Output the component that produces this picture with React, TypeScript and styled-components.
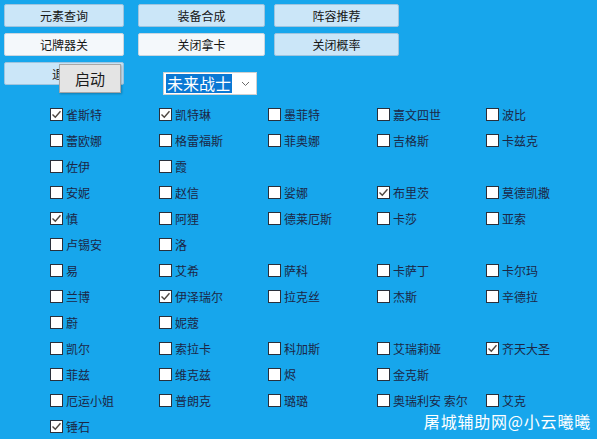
import React from "react";
import styled, { createGlobalStyle } from "styled-components";

const GlobalStyle = createGlobalStyle`
  html, body {
    margin: 0;
    padding: 0;
    background-color: #17a6ec;
  }
  * {
    box-sizing: border-box;
  }
`;

const Wrapper = styled.div`
  position: relative;
  width: 597px;
  height: 439px;
  overflow: hidden;
  background-color: #17a6ec;
  padding: 4px 0 0 4px;
  font-family: "Noto Sans CJK SC", "Noto Sans", sans-serif;
`;
const ToolGrid = styled.div`
  display: grid;
  grid-template-columns: 134px 136px 126px;
  grid-auto-rows: 23px;
  row-gap: 6px;
`;
const ToolButton = styled.button<{ $w: number; $light?: boolean }>`
  width: ${(p) => p.$w}px;
  height: 23px;
  padding: 0;
  border: 1px solid ${(p) => (p.$light ? "#c9d6e0" : "#9fc4de")};
  border-radius: 2px;
  background-color: ${(p) => (p.$light ? "#f4f8fb" : "#cbe6f8")};
  color: #151515;
  font-family: inherit;
  font-size: 12px;
  line-height: 21px;
  cursor: pointer;
`;
const ControlRow = styled.div`
  position: relative;
  display: flex;
  align-items: flex-start;
  margin-top: 6px;
`;
const StartPopup = styled.div`
  position: absolute;
  left: 55px;
  top: 2px;
  width: 62px;
  height: 29px;
  display: flex;
  align-items: center;
  justify-content: center;
  background-color: #e4e4e4;
  border: 1px solid #a6a6a6;
  box-shadow: 1px 1px 2px rgba(0, 0, 0, 0.25);
  color: #1a1a1a;
  font-size: 15px;
`;
const Select = styled.div`
  display: flex;
  align-items: center;
  width: 94px;
  height: 23px;
  margin: 10px 0 0 39px;
  padding: 0 6px 0 2px;
  background-color: #ffffff;
  border: 1px solid #d0d0d0;
`;
const SelectValue = styled.span`
  background-color: #0a78d4;
  color: #ffffff;
  font-size: 16px;
  line-height: 19px;
  padding: 0 1px;
`;
const Chevron = styled.svg`
  margin-left: auto;
`;
const ChampionGrid = styled.div`
  display: grid;
  grid-template-columns: repeat(5, 109px);
  grid-auto-rows: 26px;
  margin: 6px 0 0 46px;
`;
const Item = styled.label`
  display: flex;
  align-items: center;
  gap: 3px;
  color: #1c2746;
  font-size: 12px;
  white-space: nowrap;
`;
const Box = styled.span`
  display: flex;
  align-items: center;
  justify-content: center;
  width: 13px;
  height: 13px;
  background-color: #ffffff;
  border: 1px solid #2a2f3a;
`;
const Watermark = styled.div`
  position: absolute;
  right: 6px;
  bottom: 6px;
  color: #ffffff;
  font-size: 16px;
  letter-spacing: 0.8px;
`;

type Champion = { name: string; checked?: boolean } | null;

const rows: Champion[][] = [
  [{ name: "雀斯特", checked: true }, { name: "凯特琳", checked: true }, { name: "墨菲特" }, { name: "嘉文四世" }, { name: "波比" }],
  [{ name: "蕾欧娜" }, { name: "格雷福斯" }, { name: "菲奥娜" }, { name: "吉格斯" }, { name: "卡兹克" }],
  [{ name: "佐伊" }, { name: "霞" }, null, null, null],
  [{ name: "安妮" }, { name: "赵信" }, { name: "娑娜" }, { name: "布里茨", checked: true }, { name: "莫德凯撒" }],
  [{ name: "慎", checked: true }, { name: "阿狸" }, { name: "德莱厄斯" }, { name: "卡莎" }, { name: "亚索" }],
  [{ name: "卢锡安" }, { name: "洛" }, null, null, null],
  [{ name: "易" }, { name: "艾希" }, { name: "萨科" }, { name: "卡萨丁" }, { name: "卡尔玛" }],
  [{ name: "兰博" }, { name: "伊泽瑞尔", checked: true }, { name: "拉克丝" }, { name: "杰斯" }, { name: "辛德拉" }],
  [{ name: "蔚" }, { name: "妮蔻" }, null, null, null],
  [{ name: "凯尔" }, { name: "索拉卡" }, { name: "科加斯" }, { name: "艾瑞莉娅" }, { name: "齐天大圣", checked: true }],
  [{ name: "菲兹" }, { name: "维克兹" }, { name: "烬" }, { name: "金克斯" }, null],
  [{ name: "厄运小姐" }, { name: "普朗克" }, { name: "璐璐" }, { name: "奥瑞利安 索尔" }, { name: "艾克" }],
  [{ name: "锤石", checked: true }, null, null, null, null],
];

function Check() {
  return (
    <svg width="11" height="11" viewBox="0 0 11 11">
      <path d="M1.5 5.5 L4.3 8.3 L9.5 2.2" fill="none" stroke="#4d4640" strokeWidth="1.4" />
    </svg>
  );
}

function App() {
  return (
    <Wrapper>
      <GlobalStyle />
      <ToolGrid>
        <ToolButton $w={120}>元素查询</ToolButton>
        <ToolButton $w={127}>装备合成</ToolButton>
        <ToolButton $w={125}>阵容推荐</ToolButton>
        <ToolButton $w={120} $light>
          记牌器关
        </ToolButton>
        <ToolButton $w={127} $light>
          关闭拿卡
        </ToolButton>
        <ToolButton $w={125}>关闭概率</ToolButton>
      </ToolGrid>
      <ControlRow>
        <ToolButton $w={120}>退出</ToolButton>
        <StartPopup>启动</StartPopup>
        <Select>
          <SelectValue>未来战士</SelectValue>
          <Chevron width="9" height="6" viewBox="0 0 9 6">
            <path d="M1 1 L4.5 4.5 L8 1" fill="none" stroke="#6b6b6b" strokeWidth="1" />
          </Chevron>
        </Select>
      </ControlRow>
      <ChampionGrid>
        {rows.flatMap((row, r) =>
          row.map((c, i) =>
            c ? (
              <Item key={`${r}-${i}`}>
                <Box>{c.checked && <Check />}</Box>
                {c.name}
              </Item>
            ) : (
              <span key={`${r}-${i}`} />
            )
          )
        )}
      </ChampionGrid>
      <Watermark>屠城辅助网@小云曦曦</Watermark>
    </Wrapper>
  );
}

export default App;
